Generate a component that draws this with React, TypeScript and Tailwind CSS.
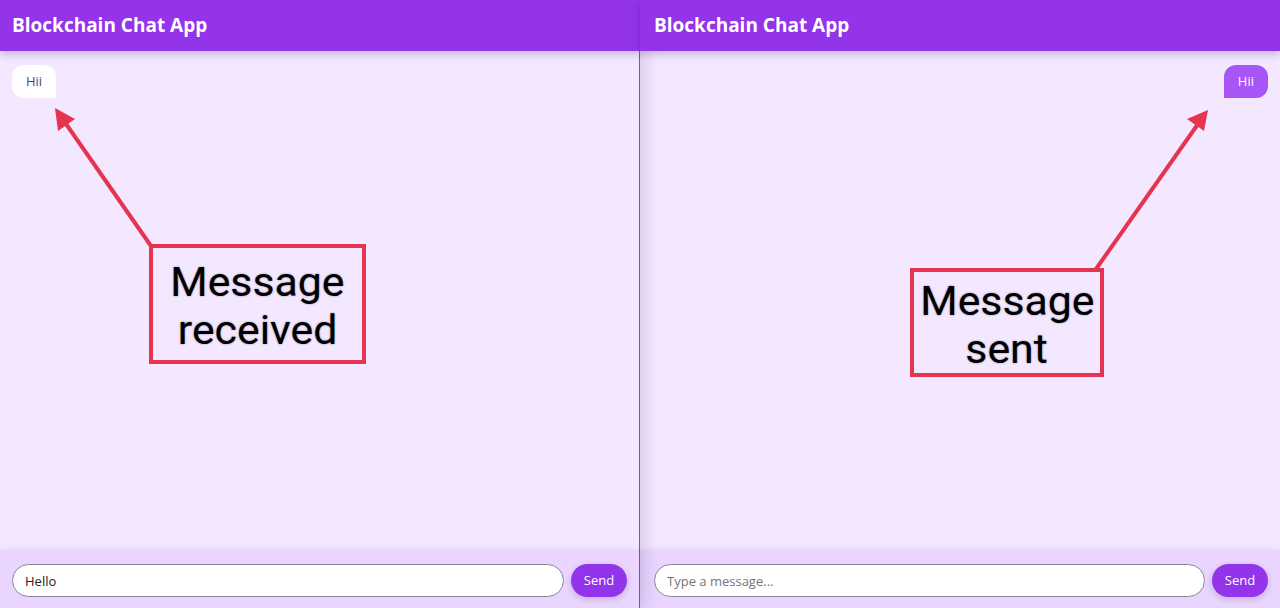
import { useState } from "react";

type Msg = { text: string; mine: boolean };

function ChatPane({
  messages,
  draft,
  divider,
}: {
  messages: Msg[];
  draft: string;
  divider?: boolean;
}) {
  const [value, setValue] = useState(draft);
  const side = divider ? "pl-3 pr-3" : "pl-[14px] pr-3";

  return (
    <div
      className={
        "flex h-full w-1/2 flex-col bg-[#f3e8ff] " +
        (divider
          ? "relative z-10 border-r border-[#6b6b6b] shadow-[6px_0_14px_rgba(60,20,90,0.12)]"
          : "")
      }
    >
      <div
        className={
          "relative z-10 flex h-[51px] items-center bg-[#9333ea] shadow-[0_3px_8px_rgba(60,20,90,0.25)] " + side
        }
      >
        <h1 className="text-[19px] font-bold text-white">Blockchain Chat App</h1>
      </div>

      <div className="flex flex-1 flex-col gap-2 px-3 pt-[14px]">
        {messages.map((m, i) => (
          <div key={i} className={m.mine ? "flex justify-end" : "flex justify-start"}>
            <div
              className={
                m.mine
                  ? "flex h-[33px] items-center rounded-xl rounded-bl-none bg-[#a855f7] px-[14px] text-[13px] text-white"
                  : "flex h-[33px] items-center rounded-xl rounded-br-none bg-white px-[14px] text-[13px] text-[#5b3b7a]"
              }
            >
              {m.text}
            </div>
          </div>
        ))}
      </div>

      <div
        className={
          "flex items-center gap-[7px] bg-[#e9d5ff] pt-[14px] pb-[11px] shadow-[0_-2px_6px_rgba(60,20,90,0.06)] " + side
        }
      >
        <input
          value={value}
          onChange={(e) => setValue(e.target.value)}
          placeholder="Type a message..."
          className="h-[33px] flex-1 rounded-full border border-[#8a8592] bg-white px-3 text-[13px] text-[#222] outline-none placeholder:text-[#757575]"
        />
        <button className="h-[33px] w-[56px] rounded-full bg-[#9333ea] text-[13px] font-medium text-white shadow-[0_2px_6px_rgba(60,20,90,0.2)]">
          Send
        </button>
      </div>
    </div>
  );
}

function Note({ lines, className }: { lines: string[]; className: string }) {
  return (
    <div
      className={
        "pointer-events-none absolute flex flex-col items-center justify-center border-[4px] border-[#e5344f] pt-[6px] font-['Roboto',sans-serif] text-[40px] leading-[48px] text-black [text-shadow:0_0_2px_rgba(0,0,0,0.45)] " +
        className
      }
    >
      {lines.map((l) => (
        <span key={l} className="scale-x-[1.07]">
          {l}
        </span>
      ))}
    </div>
  );
}

export default function App() {
  return (
    <div className="relative flex h-screen w-full overflow-hidden font-['Open_Sans','Noto_Sans',sans-serif]">
      <ChatPane divider messages={[{ text: "Hii", mine: false }]} draft="Hello" />
      <ChatPane messages={[{ text: "Hii", mine: true }]} draft="" />

      <svg
        className="pointer-events-none absolute left-0 top-0 z-20"
        width="1280"
        height="608"
        viewBox="0 0 1280 608"
      >
        <line x1="151" y1="246" x2="64" y2="121" stroke="#e5344f" strokeWidth="4" />
        <polygon points="55,108 58,131 75,119" fill="#e5344f" />
        <line x1="1096" y1="269" x2="1198" y2="124" stroke="#e5344f" strokeWidth="4" />
        <polygon points="1208,110 1187,119 1204,131" fill="#e5344f" />
      </svg>

      <Note lines={["Message", "received"]} className="left-[149px] top-[244px] z-20 h-[120px] w-[217px]" />
      <Note lines={["Message", "sent"]} className="left-[910px] top-[268px] z-20 h-[109px] w-[194px]" />
    </div>
  );
}
